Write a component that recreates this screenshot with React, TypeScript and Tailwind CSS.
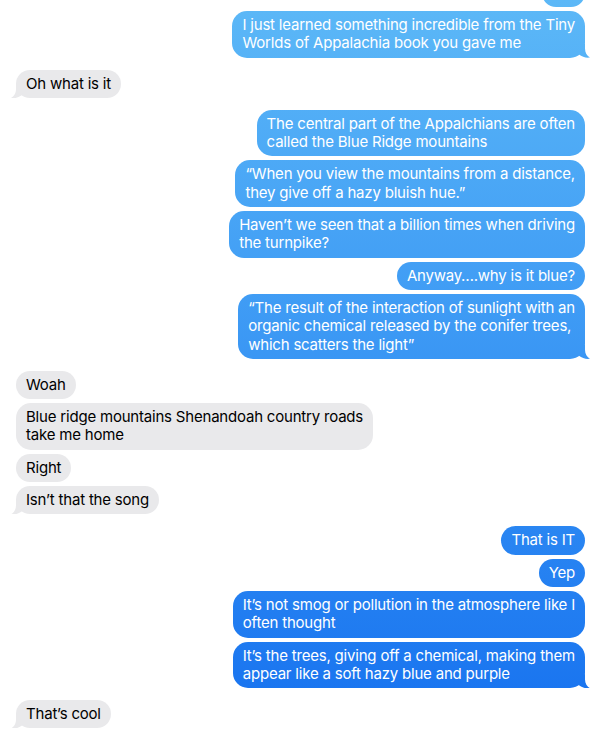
import React from "react";

type Msg = { me: boolean; lines: string[]; tail?: boolean };
type Group = Msg[];

const groups: Group[] = [
  [
    { me: true, lines: [] },
    { me: true, lines: ["I just learned something incredible from the Tiny", "Worlds of Appalachia book you gave me"], tail: true },
  ],
  [{ me: false, lines: ["Oh what is it"], tail: true }],
  [
    { me: true, lines: ["The central part of the Appalchians are often", "called the Blue Ridge mountains"] },
    { me: true, lines: ["\u201CWhen you view the mountains from a distance,", "they give off a hazy bluish hue.\u201D"] },
    { me: true, lines: ["Haven\u2019t we seen that a billion times when driving", "the turnpike?"] },
    { me: true, lines: ["Anyway\u2026.why is it blue?"] },
    { me: true, lines: ["\u201CThe result of the interaction of sunlight with an", "organic chemical released by the conifer trees,", "which scatters the light\u201D"], tail: true },
  ],
  [
    { me: false, lines: ["Woah"] },
    { me: false, lines: ["Blue ridge mountains Shenandoah country roads", "take me home"] },
    { me: false, lines: ["Right"] },
    { me: false, lines: ["Isn\u2019t that the song"], tail: true },
  ],
  [
    { me: true, lines: ["That is IT"] },
    { me: true, lines: ["Yep"] },
    { me: true, lines: ["It\u2019s not smog or pollution in the atmosphere like I", "often thought"] },
    { me: true, lines: ["It\u2019s the trees, giving off a chemical, making them", "appear like a soft hazy blue and purple"], tail: true },
  ],
  [{ me: false, lines: ["That\u2019s cool"], tail: true }],
];

const blueBg = "bg-fixed bg-linear-to-b from-[#5cb8f7] to-[#1570ef]";

function Bubble({ m }: { m: Msg }) {
  if (m.me) {
    if (m.lines.length === 0) {
      return (
        <div className="flex justify-end">
          <div className={`h-[28px] w-[43px] rounded-[15px] ${blueBg}`} />
        </div>
      );
    }
    return (
      <div className="flex justify-end">
        <div className={`relative rounded-[15px] px-[10px] py-[5px] text-white ${blueBg}`}>
          {m.tail && (
            <div
              className={`absolute bottom-0 right-[-5px] h-[14px] w-[12px] ${blueBg} [clip-path:path('M0_0H7V5C7_9_9_12.5_12_14C8_14.5_4_13.5_1_11Z')]`}
            />
          )}
          <div className="relative whitespace-nowrap">
            {m.lines.map((l, i) => (
              <div key={i}>{l}</div>
            ))}
          </div>
        </div>
      </div>
    );
  }
  return (
    <div className="flex justify-start">
      <div className="relative rounded-[15px] bg-[#e9e9eb] px-[10px] py-[5px] text-black">
        {m.tail && (
          <div className="absolute bottom-0 left-[-5px] h-[14px] w-[12px] bg-[#e9e9eb] [clip-path:path('M12_0H5V5C5_9_3_12.5_0_14C4_14.5_8_13.5_11_11Z')]" />
        )}
        <div className="relative whitespace-nowrap">
          {m.lines.map((l, i) => (
            <div key={i}>{l}</div>
          ))}
        </div>
      </div>
    </div>
  );
}

export default function App() {
  return (
    <div className="h-[740px] w-[600px] overflow-hidden bg-white font-['Inter',sans-serif] text-[15px] leading-[18.3px] tracking-[-0.2px]">
      <div className="mt-[-21px] flex flex-col gap-[12px] pl-[16px] pr-[15px]">
        {groups.map((g, gi) => (
          <div key={gi} className="flex flex-col gap-[4px]">
            {g.map((m, mi) => (
              <Bubble key={mi} m={m} />
            ))}
          </div>
        ))}
      </div>
    </div>
  );
}
